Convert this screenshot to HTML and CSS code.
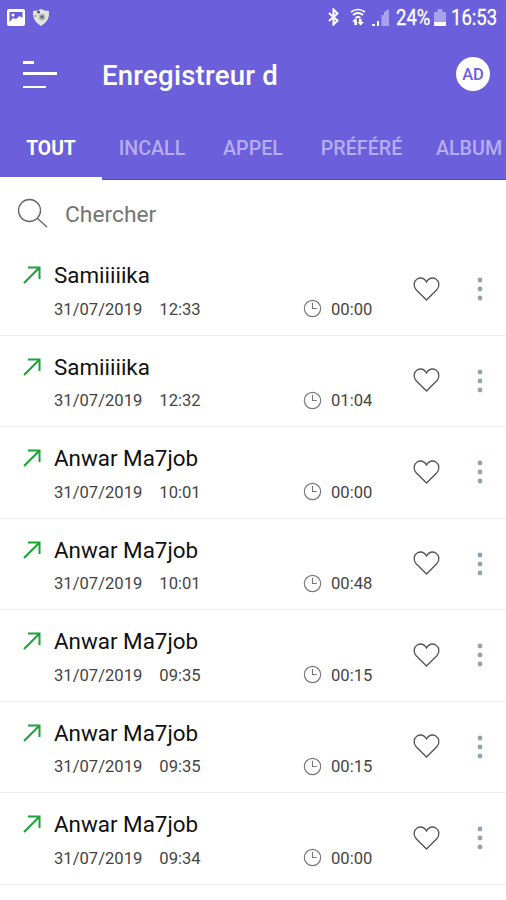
FILE: index.html
```html
<!DOCTYPE html>
<html lang="fr">
<head>
<meta charset="utf-8">
<title>Enregistreur d</title>
<link rel="stylesheet" href="styles.css">
</head>
<body>
<svg class="defs" aria-hidden="true">
  <symbol id="out" viewBox="0 0 18 18"><path d="M1 17 16.500 1.500M5 1.500H16.500V13"/></symbol>
  <symbol id="clock" viewBox="0 0 20 20"><circle cx="10" cy="10" r="8.600"/><path d="M10 4v6h4.500"/></symbol>
  <symbol id="heart" viewBox="0 0 28 26"><path d="M14 24.500 3.300 13.700C-.2 10 1 4.600 4.300 2.600 8 .4 12 1.800 14 5.600 16 1.800 20 .4 23.700 2.600 27 4.600 28.200 10 24.700 13.700Z"/></symbol>
  <symbol id="more" viewBox="0 0 6 24"><circle cx="3" cy="3" r="2.400"/><circle cx="3" cy="12" r="2.400"/><circle cx="3" cy="21" r="2.400"/></symbol>
</svg>
<header class="top">
  <div class="status">
    <svg class="st-pic" viewBox="0 0 18 17"><rect width="18" height="17" rx="2" fill="#fff"/><path d="M2.500 3H15.500V9L12.500 7 9 10 6 9 2.500 13Z" fill="#6c5fdc"/><circle cx="6" cy="6" r="1.500" fill="#fff"/></svg>
    <svg class="st-shield" viewBox="0 0 18 18"><path d="M1 3Q6 3 9 1 12 3 17 3 18 13 9 18 0 13 1 3Z" fill="#e4e4e0"/><circle cx="10" cy="9" r="3.500" fill="#bbb"/><circle cx="10" cy="9" r="1.800" fill="#666"/><circle cx="6.500" cy="4" r="1.500" fill="#555"/><circle cx="3.500" cy="8" r="1" fill="#888"/></svg>
    <span class="spacer"></span>
    <svg class="st-bt" viewBox="0 0 12 18"><path d="M1.500 5 10 12.500 6 16.500V1.500L10 5.500 1.500 13" fill="none" stroke="#fff" stroke-width="2"/></svg>
    <svg class="st-wifi" viewBox="0 0 16 18"><g fill="none" stroke="#fff" stroke-width="1.700"><path d="M1 4Q8-1 15 4M3 7Q8 3 13 7M5.500 10Q8 8 10.500 10"/></g><path d="M4.300 17V13.500H2L5 10.500 7 12V17ZM9 11H11.700V14H14L10.500 17.500 7.500 14H9Z" fill="#fff"/></svg>
    <svg class="st-signal" viewBox="0 0 17 17"><path d="M0 15h3v2H0zM5 12h2v5H5z" fill="#fff"/><path d="M9.500 6h2.500v11H9.500zM12 3 17 0V17H12z" fill="#a9a1ee"/></svg>
    <span class="percent">24%</span>
    <svg class="st-batt" viewBox="0 0 12 17"><path d="M0 3H3L4 0H8L9 3H12V13H0Z" fill="#a9a1ee"/><path d="M0 13H12V17H0Z" fill="#fff"/></svg>
    <span class="time">16:53</span>
  </div>
  <div class="bar">
    <div class="menu"><i></i><i></i><i></i></div>
    <h1>Enregistreur d</h1>
    <div class="ad">AD</div>
  </div>
  <nav class="tabs"><a class="active">TOUT</a><a>INCALL</a><a>APPEL</a><a>PRÉFÉRÉ</a><a>ALBUM</a></nav>
</header>
<div class="search">
  <svg viewBox="0 0 32 32"><circle cx="12.500" cy="12.500" r="11"/><path d="M20.500 20.500 30 29"/></svg>
  <span>Chercher</span>
</div>
<main id="list"></main>
<script src="app.js"></script>
</body>
</html>
```
FILE: styles.css
```css
* { box-sizing: border-box; }
body { margin: 0; width: 506px; height: 900px; overflow: hidden; background: #fff; font-family: Roboto, "Liberation Sans", sans-serif; color: #111; }
.defs { display: none; }
.top { height: 180px; background: #6c5fdc; color: #fff; }
.status { height: 34px; display: flex; align-items: center; padding: 0 8px 0 7px; font-size: 21.500px; }
.spacer { flex: 1; }
.st-pic { width: 18px; height: 17px; margin-right: 7px; }
.st-shield { width: 18px; height: 18px; }
.st-bt { width: 13px; height: 18px; margin-right: 10px; }
.st-wifi { width: 16px; height: 18px; margin-right: 6px; }
.st-signal { width: 17px; height: 17px; margin-right: 7px; }
.st-batt { width: 12px; height: 17px; margin: 0 5px 0 4px; }
.percent, .time { white-space: nowrap; transform-origin: left center; transform: scaleX(.86); -webkit-text-stroke: .3px #fff; }
.percent { width: 34px; }
.time { width: 47px; }
.bar { height: 81px; display: flex; align-items: center; padding: 0 16px 0 23px; }
.menu { width: 34px; height: 27px; display: flex; flex-direction: column; justify-content: space-between; margin-right: 45px; }
.menu i { height: 2.500px; background: #fff; }
.menu i:nth-child(1) { width: 11px; }
.menu i:nth-child(2) { margin-top: -2px; }
.menu i:nth-child(3) { width: 23px; }
h1 { margin: 0; font-size: 27.500px; font-weight: 500; letter-spacing: .25px; padding-top: 1px; flex: 1; white-space: nowrap; }
.ad { width: 34px; height: 34px; border-radius: 50%; background: #fff; color: #6c5fdc; font-size: 16.500px; font-weight: 500; line-height: 35px; text-align: center; margin-top: -2px; }
.tabs { height: 65px; display: grid; grid-template-columns: 102px 100px 102px 115px 100px; font-size: 19.700px; font-weight: 500; line-height: 67px; text-align: center; color: #b5acf2; overflow: hidden; }
.tabs a { height: 65px; border-bottom: 1px solid #5746c8; }
.tabs .active { color: #fff; border-bottom: 3px solid #fff; font-weight: 700; font-size: 19.300px; }
.search { height: 64px; display: flex; align-items: center; padding: 4px 17px 0; color: #757575; font-size: 22.800px; gap: 16px; }
.search svg { width: 32px; height: 32px; fill: none; stroke: #666; stroke-width: 1.300; }
.row { height: 91.500px; border-bottom: 1px solid #eee; display: grid; grid-template-columns: 54px 249px 98px 52px 53px; grid-template-rows: 20px 23.500px 34.500px; padding-top: 13px; }
.row svg { fill: none; }
.row .out { width: 18px; height: 18px; stroke: #18a436; stroke-width: 2; margin: 9px 0 0 22.500px; grid-row: 1 / 3; }
.name { grid-column: 2; grid-row: 1 / 3; font-size: 22.400px; line-height: 37px; white-space: nowrap; }
.meta { grid-column: 2; grid-row: 3; display: flex; gap: 17px; }
.meta, .dur { font-size: 16.600px; line-height: 18px; color: #444; white-space: nowrap; }
.dur { grid-column: 3; grid-row: 3; display: flex; gap: 9px; }
.dur svg { width: 19px; height: 19px; stroke: #777; stroke-width: 1.200; margin-top: -1.500px; }
.row .heart { grid-column: 4; grid-row: 1 / 4; width: 27px; height: 26px; stroke: #555; stroke-width: 1.400; margin: 18.500px 0 0 12px; }
.row .more { grid-column: 5; grid-row: 1 / 4; width: 6px; height: 24px; fill: #90a4ae; margin: 20px 0 0 24px; }
```
FILE: app.js
```js
const calls = [
  ["Samiiiiika", "12:33", "00:00"],
  ["Samiiiiika", "12:32", "01:04"],
  ["Anwar Ma7job", "10:01", "00:00"],
  ["Anwar Ma7job", "10:01", "00:48"],
  ["Anwar Ma7job", "09:35", "00:15"],
  ["Anwar Ma7job", "09:35", "00:15"],
  ["Anwar Ma7job", "09:34", "00:00"]
];
document.getElementById("list").innerHTML = calls.map(([name, time, dur]) => `
  <article class="row">
    <svg class="out"><use href="#out"/></svg>
    <div class="name">${name}</div>
    <div class="meta"><span>31/07/2019</span><span>${time}</span></div>
    <div class="dur"><svg><use href="#clock"/></svg><span>${dur}</span></div>
    <svg class="heart"><use href="#heart"/></svg>
    <svg class="more"><use href="#more"/></svg>
  </article>`).join("");
```
